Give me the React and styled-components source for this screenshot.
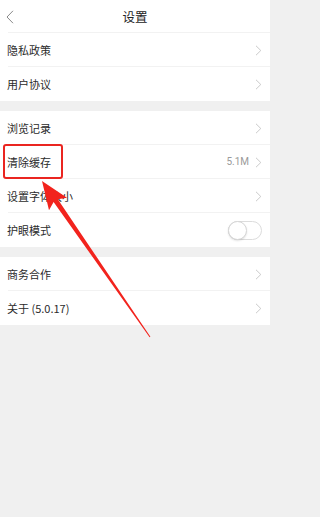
import React from 'react';
import styled, { createGlobalStyle } from 'styled-components';

const GlobalStyle = createGlobalStyle`
  html, body {
    margin: 0;
    padding: 0;
    background: #f0f0f0;
  }
  body {
    font-family: "Noto Sans CJK SC", "Noto Sans", sans-serif;
    -webkit-font-smoothing: antialiased;
  }
`;

const sections = [
  [
    { label: '隐私政策', arrow: true },
    { label: '用户协议', arrow: true },
  ],
  [
    { label: '浏览记录', arrow: true },
    { label: '清除缓存', value: '5.1M', arrow: true },
    { label: '设置字体大小', arrow: true },
    { label: '护眼模式', toggle: true },
  ],
  [
    { label: '商务合作', arrow: true },
    { label: '关于 (5.0.17)', arrow: true },
  ],
];

const ChevronRight = () => (
  <svg width="7" height="11" viewBox="0 0 7 11" fill="none">
    <path d="M1 0.8L5.8 5.5L1 10.2" stroke="#c4c4c4" strokeWidth="0.9" />
  </svg>
);

const ChevronLeft = () => (
  <svg width="8" height="14" viewBox="0 0 8 14" fill="none">
    <path d="M7 0.8L1 7L7 13.2" stroke="#8a8a8a" strokeWidth="1" />
  </svg>
);

const App = () => (
  <>
    <GlobalStyle />
    <Page>
      <Header>
        <BackButton>
          <ChevronLeft />
        </BackButton>
        <Title>设置</Title>
      </Header>
      {sections.map((rows, i) => (
        <Section key={i} $first={i === 0}>
          {rows.map((row, j) => (
            <Row key={row.label} $last={j === rows.length - 1}>
              <Label>{row.label}</Label>
              <Right>
                {row.value && <Value>{row.value}</Value>}
                {row.arrow && <ChevronRight />}
                {row.toggle && (
                  <Toggle>
                    <Knob />
                  </Toggle>
                )}
              </Right>
            </Row>
          ))}
        </Section>
      ))}
      <Highlight />
      <Pointer viewBox="0 0 270 517">
        <polygon
          points="42,181 67,197.7 57.8,199.3 150.4,336.7 149.6,337.3 53.6,202.1 49,210.3"
          fill="#f2231d"
        />
      </Pointer>
    </Page>
  </>
);

export default App;

const Page = styled.div`
  position: relative;
  width: 270px;
  min-height: 517px;
  background: #f0f0f0;
  overflow: hidden;
`;

const Header = styled.div`
  position: relative;
  height: 33px;
  display: flex;
  align-items: center;
  justify-content: center;
  background: #fff;
  &::after {
    content: '';
    position: absolute;
    left: 8px;
    right: 0;
    bottom: 0;
    height: 1px;
    background: #f2f2f2;
  }
`;

const BackButton = styled.div`
  position: absolute;
  left: 6px;
  top: 10px;
  display: flex;
`;

const Title = styled.div`
  font-size: 12.5px;
  color: #222;
  line-height: 1;
  padding-top: 1px;
`;

const Section = styled.div`
  background: #fff;
  margin-top: ${({ $first }) => ($first ? '0' : '10px')};
`;

const Row = styled.div`
  position: relative;
  height: 34px;
  display: flex;
  align-items: center;
  justify-content: space-between;
  padding: 0 8px 0 7px;
  &::after {
    content: '';
    display: ${({ $last }) => ($last ? 'none' : 'block')};
    position: absolute;
    left: 8px;
    right: 0;
    bottom: 0;
    height: 1px;
    background: #f2f2f2;
  }
`;

const Label = styled.span`
  font-size: 11px;
  color: #2b2b2b;
  line-height: 1;
`;

const Right = styled.div`
  display: flex;
  align-items: center;
  gap: 6px;
`;

const Value = styled.span`
  font-family: "Roboto", "Noto Sans", sans-serif;
  font-size: 10px;
  color: #9a9a9a;
  line-height: 1;
`;

const Toggle = styled.div`
  width: 34px;
  height: 19px;
  box-sizing: border-box;
  border: 1px solid #dcdcdc;
  border-radius: 10px;
  background: #fff;
  display: flex;
  align-items: center;
`;

const Knob = styled.div`
  width: 19px;
  height: 19px;
  margin-left: -1px;
  box-sizing: border-box;
  border-radius: 50%;
  border: 1px solid #d6d6d6;
  background: #fff;
  box-shadow: 0 1px 2px rgba(0, 0, 0, 0.12);
`;

const Highlight = styled.div`
  position: absolute;
  left: 3px;
  top: 144px;
  width: 60px;
  height: 35px;
  box-sizing: border-box;
  border: 2px solid #ea2520;
  border-radius: 3px;
  pointer-events: none;
`;

const Pointer = styled.svg`
  position: absolute;
  left: 0;
  top: 0;
  width: 270px;
  height: 517px;
  pointer-events: none;
`;
